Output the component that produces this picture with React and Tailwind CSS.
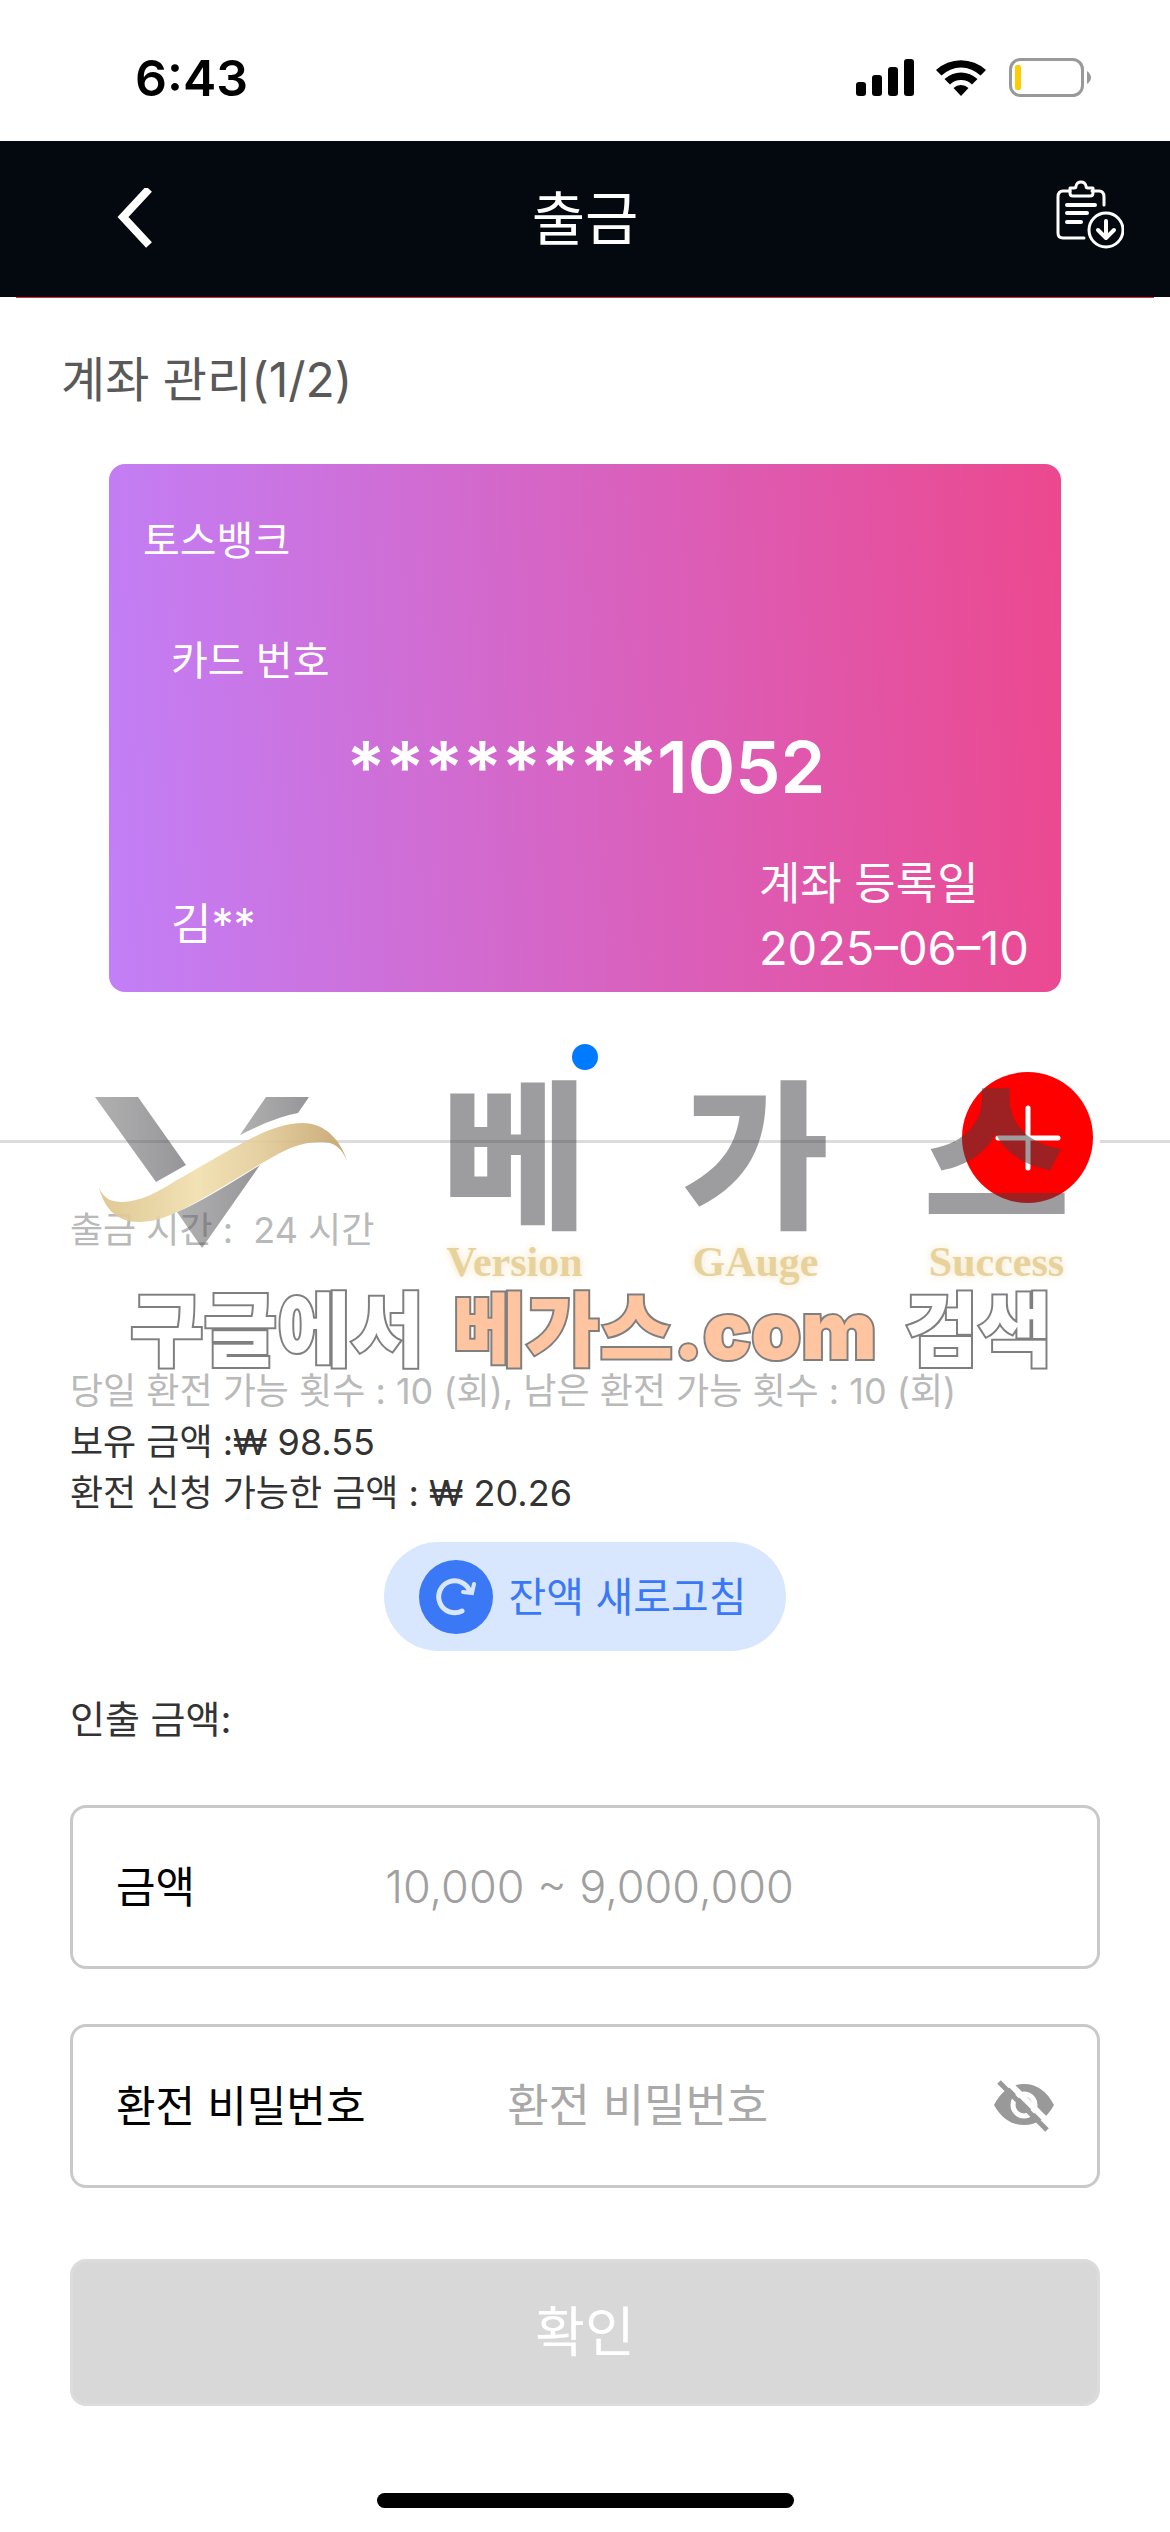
import React, { useState } from "react";

const account = {
  bank: "토스뱅크",
  number: "********1052",
  owner: "김**",
  createdAt: "2025–06–10",
};

const StatusBar = () => (
  <div className="h-[141px] pl-[135px] pr-[78px] pt-[14px] flex items-center justify-between text-black">
    <span className="text-[50px] leading-[56px] font-semibold">6:43</span>
    <div className="flex items-center gap-[22px]">
      <svg className="w-[58px] h-[37px]" viewBox="0 0 58 37" aria-hidden="true">
        <rect x="0" y="23" width="10" height="14" rx="3" />
        <rect x="16" y="16" width="10" height="21" rx="3" />
        <rect x="32" y="8" width="10" height="29" rx="3" />
        <rect x="48" y="0" width="10" height="37" rx="3" />
      </svg>
      <svg className="w-[51px] h-[37px]" viewBox="0 0 51 37" aria-hidden="true">
        <path d="M0 11 A37 37 0 0 1 50 11 L44.500 16.500 A28 28 0 0 0 5.500 16.500 Z" />
        <path d="M8.500 20 A24 24 0 0 1 41.500 20 L36 25.500 A16 16 0 0 0 14 25.500 Z" />
        <path d="M17.500 29 A11 11 0 0 1 32.500 29 L25 37 Z" />
      </svg>
      <svg className="w-[83px] h-[39px]" viewBox="0 0 83 39" aria-hidden="true">
        <rect x="1.500" y="1.500" width="72" height="36" rx="10" fill="none" stroke="#999" strokeWidth="3" />
        <rect x="6" y="7" width="6" height="25" rx="2" fill="#ffcc00" />
        <path d="M78 13 Q82 16 82 19.500 Q82 23 78 26 Z" fill="#999" />
      </svg>
    </div>
  </div>
);

const Header = () => (
  <header>
    <div className="h-[156px] pl-[113px] pr-[46px] flex items-center justify-between bg-[#04080f] text-white">
      <button type="button" aria-label="뒤로" className="w-[70px]">
        <svg className="w-[42px] h-[62px]" viewBox="0 0 42 62" fill="none" stroke="currentColor" strokeWidth="8">
          <path d="M36 1 L10 29 L36 57" />
        </svg>
      </button>
      <h1 className="text-[58px] leading-[64px]">출금</h1>
      <button type="button" aria-label="출금 내역" className="w-[137px] flex justify-end">
        <svg
          className="w-[68px] h-[78px]"
          viewBox="0 0 68 78"
          fill="none"
          stroke="currentColor"
          strokeWidth="3"
          strokeLinecap="round"
          strokeLinejoin="round"
        >
          <path d="M14 11 H7 Q2 11 2 17 V53 Q2 58 7 58 H28" />
          <path d="M36 11 H43 Q48 11 48 17 V25" />
          <path d="M14 8 H18 Q20 8 20 6 Q21 2 25 2 Q29 2 30 6 Q30 8 32 8 H37 V13 Q37 16 34 16 H17 Q14 16 14 13 Z" />
          <path d="M11 25 H39 M11 33 H31 M11 42 H25" strokeWidth="4" />
          <circle cx="50" cy="50" r="17" />
          <path d="M50 41 V57 M42 50 L50 58 L58 50" strokeWidth="4" />
        </svg>
      </button>
    </div>
    <div className="mx-4 h-px bg-[#e0282e]" />
  </header>
);

const AccountCard = ({ account }) => (
  <div className="mx-[109px] mt-14 pl-[34px] pr-8 pt-[53px] pb-3 rounded-2xl text-white bg-[linear-gradient(87deg,#c27ff7,#ec488e)]">
    <p className="text-[40px] leading-[48px]">{account.bank}</p>
    <p className="mt-[72px] pl-7 text-[40px] leading-[48px]">카드 번호</p>
    <p className="mt-[42px] text-center text-[72px] leading-[80px] font-semibold">{account.number}</p>
    <div className="mt-[45px] pl-7 flex items-end justify-between">
      <p className="mb-6 text-[44px] leading-[64px]">{account.owner}</p>
      <div className="text-[45px] leading-[64px]">
        <p>계좌 등록일</p>
        <p className="text-[47px]">{account.createdAt}</p>
      </div>
    </div>
  </div>
);

const BrandColumn = ({ letter, label }) => (
  <div className="w-[153px] flex flex-col items-center whitespace-nowrap">
    <span className="text-[160px] leading-[160px] font-black text-[#3e3e42]/51">{letter}</span>
    <span className="font-['Liberation_Serif','DejaVu_Serif',serif] font-bold text-[42px] leading-[48px] text-[#e8d29c] [text-shadow:0_0_8px_#f3e3bd]">
      {label}
    </span>
  </div>
);

// Brand overlay that floats over the divider and the info text
const Watermark = () => (
  <div className="absolute top-[6px] left-[90px] pointer-events-none">
    <div className="flex gap-[88px]">
      <svg className="mt-3 w-[260px] h-[160px] shrink-0" viewBox="0 0 260 160" aria-hidden="true">
        <defs>
          <linearGradient id="steel" x1="0" y1="0" x2="1" y2="0">
            <stop offset="0" stopColor="#6c6a6c" />
            <stop offset="1" stopColor="#38363a" />
          </linearGradient>
          <linearGradient id="gold" x1="0" y1="0" x2="1" y2="0">
            <stop offset="0" stopColor="#dcc48b" />
            <stop offset="0.400" stopColor="#f0dfae" />
            <stop offset="0.650" stopColor="#e3cc9a" />
            <stop offset="1" stopColor="#c4a26b" />
          </linearGradient>
        </defs>
        <g fill="url(#steel)" opacity="0.520">
          <path d="M5 7 H48 L96 75 L66 92 Z" />
          <path d="M176 7 H219 L208 23 Q185 27 150 45 Z" />
          <path d="M170 75 L112 158 L87 122 Q110 113 170 75 Z" />
        </g>
        <path
          fill="url(#gold)"
          opacity="0.920"
          d="M9 98 C14 109 22 112 32 112 C50 112 70 101 87 90 C110 77 130 65 149 55 C170 43 192 33 213 33 C235 33 250 50 257 70 C250 56 243 52 230 52 C215 52 204 56 190 63 C160 79 115 109 87 122 C75 128 62 132 49 132 C28 132 15 120 9 98 Z"
        />
      </svg>
      <BrandColumn letter="베" label="Version" />
      <BrandColumn letter="가" label="GAuge" />
      <BrandColumn letter="스" label="Success" />
    </div>
    <p className="mt-1 pl-10 flex gap-7 text-[80px] leading-[80px] font-black whitespace-nowrap text-white [-webkit-text-stroke:4px_#7f7f7f] [paint-order:stroke_fill]">
      <span>구글에서</span>
      <span className="text-[#ffc5a0]">베가스.com</span>
      <span>검색</span>
    </p>
  </div>
);

const App = () => {
  const [amount, setAmount] = useState("");
  const [password, setPassword] = useState("");
  const [showPassword, setShowPassword] = useState(false);

  return (
    <div className="min-h-screen bg-white font-['Inter','Noto_Sans_CJK_KR',sans-serif]">
      <StatusBar />
      <Header />

      <main>
        <h2 className="mt-[54px] px-[61px] text-[48px] leading-[56px] text-[#595959]">계좌 관리(1/2)</h2>
        <AccountCard account={account} />
        <div className="mx-auto mt-[52px] size-[26px] rounded-full bg-[#007aff]" />

        <div className="relative mt-[2px]">
          {/* Divider with add button */}
          <div className="flex items-center">
            <div className="mt-2 flex-1 h-[3px] bg-[#dcdcdc]" />
            <button
              type="button"
              aria-label="계좌 추가"
              className="mx-[7px] size-[131px] rounded-full bg-[#ff0000] text-white flex items-center justify-center"
            >
              <svg className="size-[66px]" viewBox="0 0 66 66" stroke="currentColor" strokeWidth="5" strokeLinecap="round">
                <path d="M33 3 V63 M3 33 H63" />
              </svg>
            </button>
            <div className="mt-2 w-[70px] h-[3px] bg-[#dcdcdc]" />
          </div>

          {/* Withdrawal info */}
          <div className="px-[70px] text-[36px] leading-[51px] text-[#333]">
            <p className="mt-[2px] text-[#b9b9b9] whitespace-pre">출금 시간 :  24 시간</p>
            <p className="mt-[110px] text-[#b9b9b9]">당일 환전 가능 횟수 : 10 (회), 남은 환전 가능 횟수 : 10 (회)</p>
            <p>보유 금액 :₩ 98.55</p>
            <p>환전 신청 가능한 금액 : ₩ 20.26</p>
          </div>

          <Watermark />
        </div>

        <button
          type="button"
          className="mx-auto mt-[23px] h-[109px] pl-[35px] pr-10 flex items-center gap-4 rounded-full bg-[#d8e7fe] text-[#3b78f6] text-[41px] leading-[52px]"
        >
          <svg className="size-[74px]" viewBox="0 0 74 74" fill="none" aria-hidden="true">
            <circle cx="37" cy="37" r="37" fill="#3b78f6" />
            <g stroke="#d8e7fe" strokeLinecap="round">
              <path d="M43 51 A16 16 0 1 1 51 32" strokeWidth="5" />
              <path d="M55 24 L53 33 L44 32" strokeWidth="4" />
            </g>
          </svg>
          잔액 새로고침
        </button>

        <form className="px-[70px]" onSubmit={(e) => e.preventDefault()}>
          <p className="mt-[42px] text-[38px] leading-[52px] text-[#333]">인출 금액:</p>

          <div className="mt-[60px] h-[164px] pl-[43px] pr-[133px] flex items-center gap-5 border-3 border-[#c9c9c9] rounded-2xl">
            <label htmlFor="amount" className="text-[43px] leading-[52px] text-black">금액</label>
            <input
              id="amount"
              type="text"
              inputMode="numeric"
              placeholder="10,000 ~ 9,000,000"
              className="flex-1 min-w-0 text-center text-[45px] leading-[56px] font-light placeholder:text-[#a0a0a0] outline-none"
              value={amount}
              onChange={(e) => setAmount(e.target.value)}
            />
          </div>

          <div className="mt-[55px] h-[164px] px-[43px] flex items-center gap-5 border-3 border-[#c9c9c9] rounded-2xl">
            <label htmlFor="password" className="text-[43px] leading-[52px] text-black">환전 비밀번호</label>
            <input
              id="password"
              type={showPassword ? "text" : "password"}
              placeholder="환전 비밀번호"
              className="flex-1 min-w-0 mr-[84px] text-center text-[45px] leading-[56px] placeholder:text-[#a9a9a9] outline-none"
              value={password}
              onChange={(e) => setPassword(e.target.value)}
            />
            <button type="button" aria-label="비밀번호 표시" onClick={() => setShowPassword(!showPassword)}>
              <svg className="w-[60px] h-[52px]" viewBox="0 0 60 52" aria-hidden="true">
                <path d="M0 25 Q11 4 30 4 Q49 4 60 25 Q49 45 30 45 Q11 45 0 25 Z" fill="#999" />
                <circle cx="30" cy="25" r="11" fill="none" stroke="#fff" strokeWidth="5" />
                <path d="M9 -3 L59 47" stroke="#fff" strokeWidth="6" />
                <path d="M5 2 L53 50" stroke="#999" strokeWidth="5" />
              </svg>
            </button>
          </div>

          <button
            type="submit"
            className="mt-[71px] w-full h-[147px] border-3 border-[#dcdcdc] rounded-2xl bg-[#d8d8d8] text-white text-[54px] leading-[60px]"
          >
            확인
          </button>
        </form>
      </main>

      <div className="pt-[87px] pb-6">
        <div className="mx-auto w-[417px] h-[15px] rounded-full bg-black" />
      </div>
    </div>
  );
};

export default App;
